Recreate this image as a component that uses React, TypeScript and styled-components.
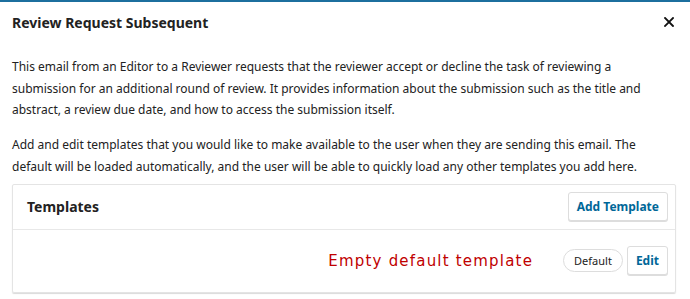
import React from 'react'
import styled, { createGlobalStyle } from 'styled-components'

const GlobalStyle = createGlobalStyle`
  html, body {
    margin: 0;
    padding: 0;
    background: #fff;
  }
  body {
    font-family: "Noto Sans", "Open Sans", sans-serif;
    color: #222;
  }
`

const Modal = styled.div`
  width: 690px;
  height: 299px;
  box-sizing: border-box;
  border-top: 2px solid #1c6f9e;
  background: #fff;
  overflow: hidden;
`

const Header = styled.div`
  display: flex;
  align-items: center;
  justify-content: space-between;
  height: 40px;
  padding: 0 13px 0 12px;
`

const Title = styled.h2`
  margin: 0;
  font-size: 14px;
  font-weight: 700;
  color: #222;
`

const CloseButton = styled.button`
  display: flex;
  align-items: center;
  justify-content: center;
  width: 16px;
  height: 16px;
  padding: 0;
  border: none;
  background: none;
  color: #222;
`

const Body = styled.div`
  padding: 14px 12px 0 12px;
`

const Description = styled.p`
  margin: 0 0 13.5px 0;
  font-size: 12px;
  line-height: 21.5px;
  color: #222;
`

const Panel = styled.div`
  margin-top: -7px;
  margin-right: 2px;
  border: 1px solid #e4e4e4;
  border-radius: 2px;
  box-shadow: 0 1px 1px rgba(0, 0, 0, 0.15);
`

const PanelHeader = styled.div`
  display: flex;
  align-items: center;
  justify-content: space-between;
  height: 44px;
  padding: 0 7px 0 14px;
  border-bottom: 1px solid #e8e8e8;
`

const PanelTitle = styled.h3`
  margin: 0;
  font-size: 14px;
  font-weight: 700;
  color: #222;
`

const Row = styled.div`
  display: flex;
  align-items: center;
  justify-content: flex-end;
  height: 62px;
  padding: 0 7px 0 14px;
`

const Annotation = styled.span`
  margin-right: 30px;
  font-family: "DejaVu Sans", Verdana, sans-serif;
  font-size: 15px;
  letter-spacing: 1.2px;
  color: #c00000;
`

const Button = styled.button<{ $height: number }>`
  height: ${(p) => p.$height}px;
  padding: 0 8px;
  border: 1px solid #ddd;
  border-radius: 3px;
  box-shadow: 0 1px 0 #ddd;
  background: #fff;
  color: #006798;
  font-family: "Noto Sans", sans-serif;
  font-size: 12px;
  font-weight: 700;
`

const Pill = styled.span`
  display: inline-flex;
  align-items: center;
  box-sizing: border-box;
  height: 23px;
  margin-right: 4px;
  padding: 0 10px;
  border: 1px solid #ddd;
  border-radius: 12px;
  font-size: 11px;
  color: #222;
`

const CloseIcon = () => (
  <svg width="10" height="10" viewBox="0 0 10 10">
    <path d="M1 1L9 9M9 1L1 9" stroke="#111" strokeWidth="1.8" strokeLinecap="square" />
  </svg>
)

const App: React.FC = () => (
  <>
    <GlobalStyle />
    <Modal>
      <Header>
        <Title>Review Request Subsequent</Title>
        <CloseButton aria-label="Close"><CloseIcon /></CloseButton>
      </Header>
      <Body>
        <Description>
          This email from an Editor to a Reviewer requests that the reviewer accept or decline the task of reviewing a
          submission for an additional round of review. It provides information about the submission such as the title and
          abstract, a review due date, and how to access the submission itself.
        </Description>
        <Description>
          Add and edit templates that you would like to make available to the user when they are sending this email. The
          default will be loaded automatically, and the user will be able to quickly load any other templates you add here.
        </Description>
        <Panel>
          <PanelHeader>
            <PanelTitle>Templates</PanelTitle>
            <Button $height={29}>Add Template</Button>
          </PanelHeader>
          <Row>
            <Annotation>Empty default template</Annotation>
            <Pill>Default</Pill>
            <Button $height={29}>Edit</Button>
          </Row>
        </Panel>
      </Body>
    </Modal>
  </>
)

export default App
